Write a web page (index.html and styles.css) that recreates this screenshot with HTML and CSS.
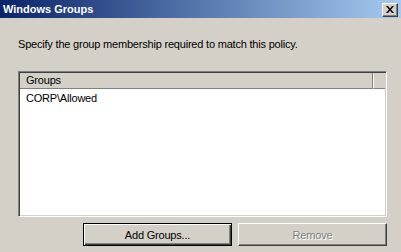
FILE: index.html
```html
<!DOCTYPE html>
<html lang="en">
<head>
    <meta charset="UTF-8">
    <title>Windows Groups</title>
    <link rel="stylesheet" href="styles.css">
</head>
<body>
    <div class="window">
        <div class="titlebar">
            <span class="title">Windows Groups</span>
            <button class="close-button">
                <svg width="8" height="7" viewBox="0 0 8 7">
                    <path d="M0 0h2l2 2.5 2-2.5h2l-3 3.5 3 3.5h-2l-2-2.5-2 2.5h-2l3-3.5z" fill="#000"/>
                </svg>
            </button>
        </div>
        <div class="content">
            <p class="intro">Specify the group membership required to match this policy.</p>
            <div class="listbox">
                <div class="list-header">
                    <div class="column-head">Groups</div>
                    <div class="column-filler"></div>
                </div>
                <div class="list-row">CORP\Allowed</div>
            </div>
            <div class="buttons">
                <button class="push-button default">Add Groups...</button>
                <button class="push-button" disabled>Remove</button>
            </div>
        </div>
    </div>
</body>
</html>
```

FILE: styles.css
```css
body {
    margin: 0;
    background-color: #d4d0c8;
    font-family: "Liberation Sans", Arial, sans-serif;
    font-size: 11px;
    letter-spacing: -0.2px;
    color: #000;
}

.window {
    width: 401px;
    height: 252px;
    overflow: hidden;
}

.titlebar {
    height: 18px;
    display: flex;
    align-items: center;
    justify-content: space-between;
    padding: 0 4px 0 3px;
    background: linear-gradient(to right, #0a246a, #a6caf0);
}

.title {
    color: white;
    font-weight: bold;
    font-size: 11px;
    letter-spacing: 0;
}

.close-button {
    width: 16px;
    height: 14px;
    padding: 0;
    margin-top: 1px;
    margin-right: -1px;
    display: flex;
    align-items: center;
    justify-content: center;
    background-color: #d4d0c8;
    border: 1px solid;
    border-color: #fff #404040 #404040 #fff;
    box-shadow: inset -1px -1px 0 #808080;
}

.content {
    padding: 0 14px 0 18px;
}

.intro {
    margin: 19px 0 0 0;
    line-height: 14px;
}

.listbox {
    margin-top: 20px;
    height: 142px;
    background-color: white;
    border: 1px solid;
    border-color: #808080 #fff #fff #808080;
    box-shadow: inset 1px 1px 0 #404040, inset -1px -1px 0 #d4d0c8;
    padding: 1px;
    display: flex;
    flex-direction: column;
}

.list-header {
    display: flex;
    height: 16px;
}

.column-head {
    width: 346px;
    padding-left: 6px;
    line-height: 15px;
    background-color: #d4d0c8;
    border-bottom: 1px solid #808080;
    border-right: 1px solid #808080;
}

.column-filler {
    flex: 1;
    background-color: #d4d0c8;
    border-bottom: 1px solid #808080;
    border-left: 1px solid #fff;
}

.list-row {
    padding-left: 6px;
    line-height: 13px;
    margin-top: 3px;
}

.buttons {
    display: flex;
    gap: 6px;
    margin-top: 6px;
    padding-left: 65px;
}

.push-button {
    width: 150px;
    height: 23px;
    padding: 0;
    font-family: "Liberation Sans", Arial, sans-serif;
    font-size: 11px;
    letter-spacing: -0.2px;
    color: #000;
    background-color: #d4d0c8;
    border: 1px solid;
    border-color: #fff #404040 #404040 #fff;
    box-shadow: inset -1px -1px 0 #808080;
}

.push-button.default {
    border: 1px solid #000;
    box-shadow: inset 1px 1px 0 #fff, inset -1px -1px 0 #404040, inset -2px -2px 0 #808080;
}

.push-button:disabled {
    color: #808080;
    text-shadow: 1px 1px 0 #fff;
}
```
